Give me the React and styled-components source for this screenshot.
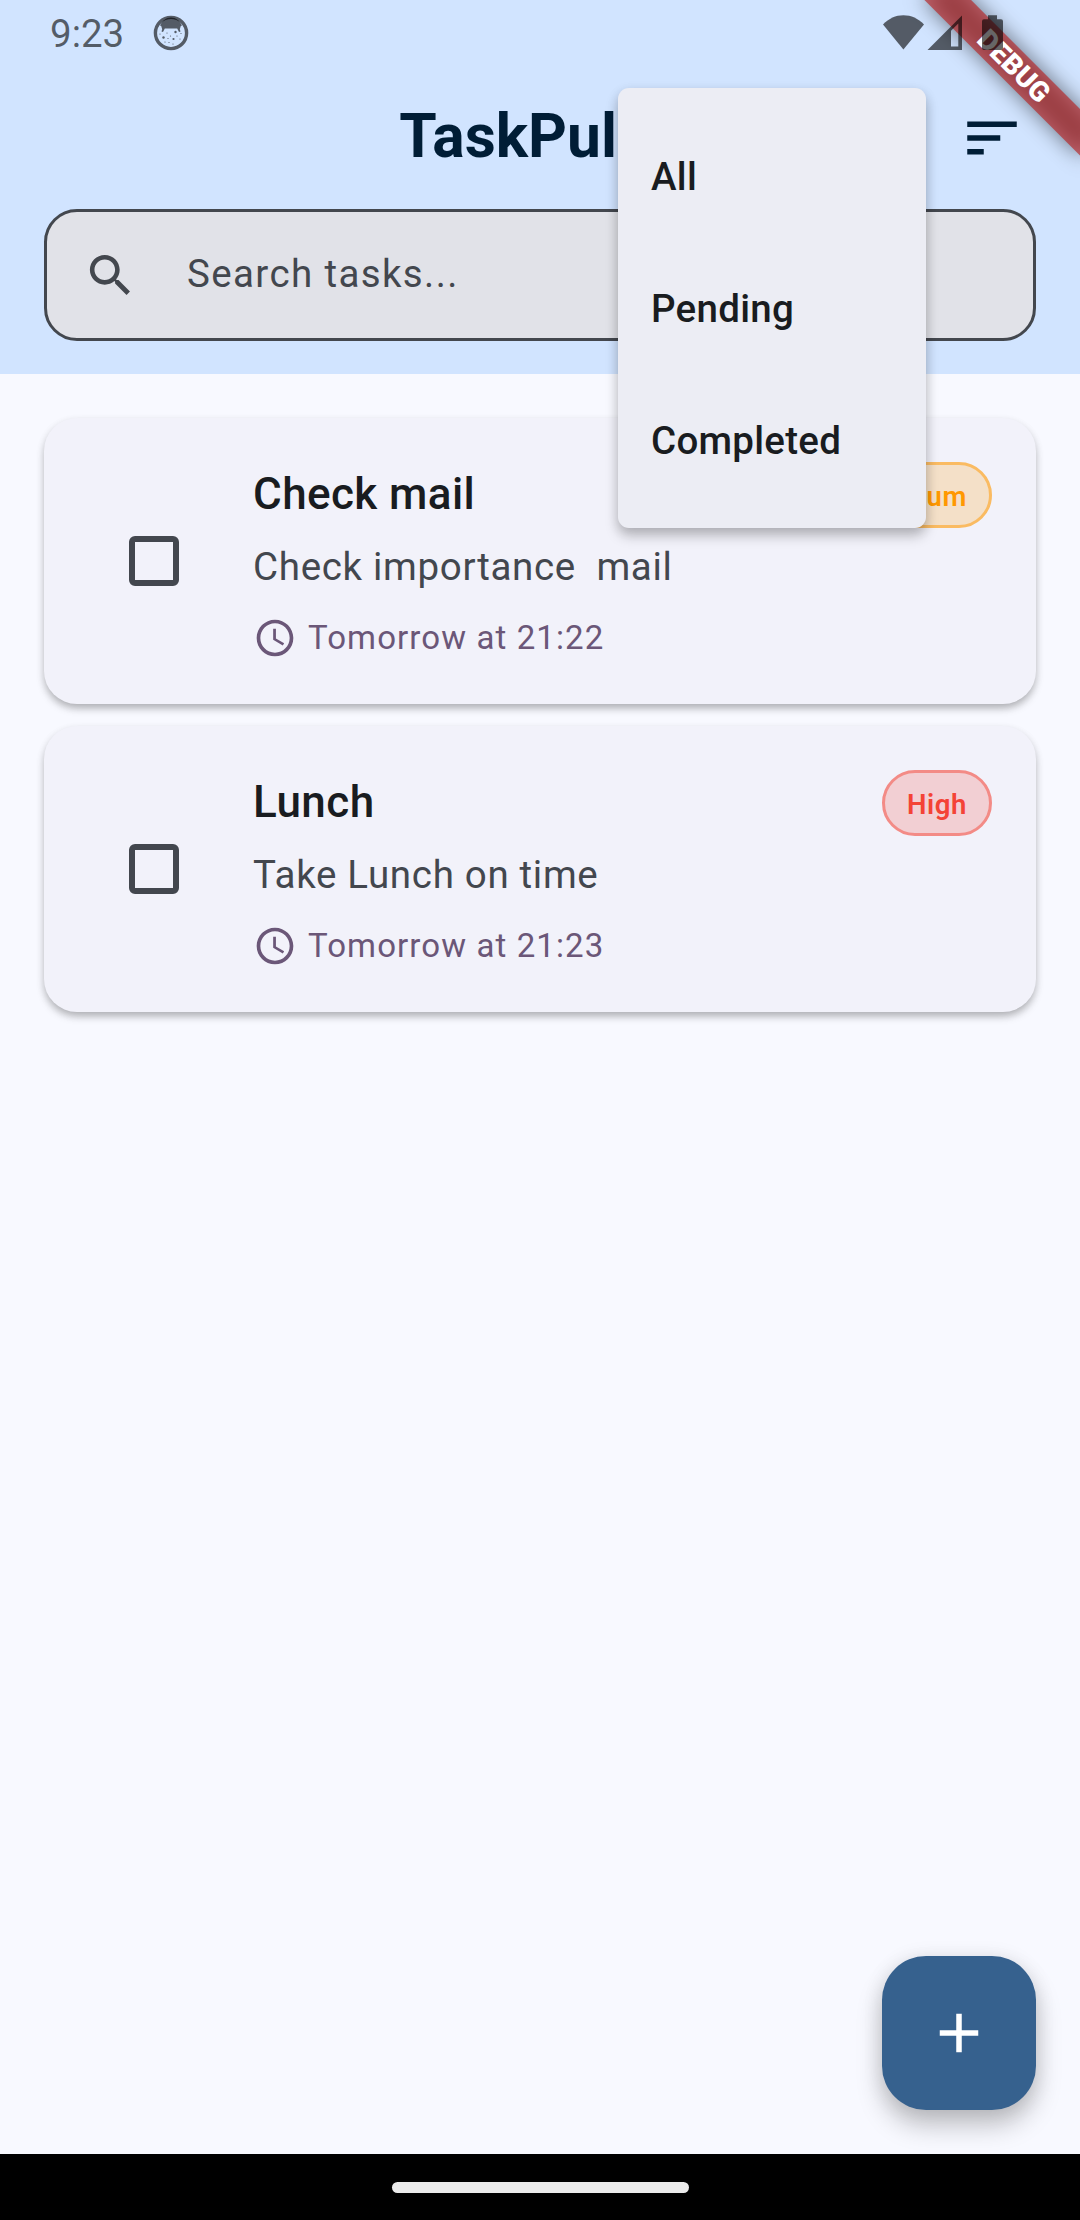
import React from "react";
import styled, { createGlobalStyle } from "styled-components";

const GlobalStyle = createGlobalStyle`
  * { box-sizing: border-box; }
  body { margin: 0; background: #f8f9ff; }
`;

const Screen = styled.div`
  position: relative;
  width: 1080px;
  height: 2220px;
  overflow: hidden;
  display: flex;
  flex-direction: column;
  background: #f8f9ff;
  color: #191c20;
  font-family: Roboto, "Liberation Sans", sans-serif;
`;

const Header = styled.header`
  display: flex;
  flex-direction: column;
  height: 374px;
  background: #d1e4ff;
`;

const StatusBar = styled.div`
  position: relative;
  z-index: 5;
  display: flex;
  align-items: center;
  justify-content: space-between;
  height: 66px;
  padding: 0 77px 0 50px;
  color: rgba(0, 0, 0, 0.6);
`;

const StatusGroup = styled.div`
  display: flex;
  align-items: center;
  gap: ${(p) => p.$gap || 0}px;
`;

const Clock = styled.span`
  font-size: 38.5px;
  line-height: 66px;
  height: 64px;
`;

const Toolbar = styled.div`
  display: flex;
  align-items: center;
  justify-content: flex-end;
  height: 143px;
  padding: 1px 55px 0 121px;
  color: #001d36;
`;

const AppTitle = styled.h1`
  flex: 1;
  margin: 0;
  height: 80px;
  font-size: 60.5px;
  line-height: 77px;
  font-weight: 700;
  text-align: center;
`;

const SearchField = styled.div`
  display: flex;
  align-items: center;
  height: 132px;
  margin: 0 44px;
  border: 3px solid #43474e;
  border-radius: 33px;
  background: #e1e2e8;
  color: #43474e;
`;

const SearchIconSlot = styled.div`
  display: flex;
  justify-content: center;
  width: 126px;
`;

const Placeholder = styled.span`
  padding: 0 0 3px 14px;
  font-size: 38.5px;
  line-height: 55px;
  letter-spacing: 1.375px;
`;

const TaskList = styled.main`
  flex: 1;
  display: flex;
  flex-direction: column;
  gap: 22px;
  padding: 44px;
`;

const TaskCard = styled.article`
  display: flex;
  align-items: flex-start;
  height: 286px;
  padding: 44px;
  border-radius: 33px;
  background: #f2f2fa;
  box-shadow: 0 5px 8px -1px rgba(0, 0, 0, 0.26), 0 3px 8px rgba(0, 0, 0, 0.08);
`;

const CheckSlot = styled.div`
  display: flex;
  align-self: center;
  justify-content: center;
  width: 132px;
  margin-right: 33px;
`;

const CheckBox = styled.div`
  width: 50px;
  height: 50px;
  border: 6px solid #43474e;
  border-radius: 6px;
`;

const TaskBody = styled.div`
  flex: 1;
  display: flex;
  flex-direction: column;
`;

const TaskName = styled.h2`
  margin: 0 0 11px;
  height: 66px;
  font-size: 44px;
  line-height: 64px;
  font-weight: 500;
  letter-spacing: 0.4125px;
`;

const TaskNote = styled.p`
  margin: 0 0 22px;
  font-size: 38.5px;
  line-height: 55px;
  letter-spacing: 0.6875px;
  white-space: pre;
  color: #43474e;
`;

const DueRow = styled.div`
  display: flex;
  align-items: center;
  gap: 11px;
  height: 44px;
  font-size: 33px;
  line-height: 44px;
  letter-spacing: 1.1px;
  color: #6b5778;
`;

const PriorityChip = styled.span`
  height: 66px;
  padding: 2px 22px 0;
  border: 3px solid ${(p) => p.$border};
  border-radius: 33px;
  background: ${(p) => p.$fill};
  color: ${(p) => p.$ink};
  font-size: 27.5px;
  line-height: 60px;
  font-weight: 600;
  letter-spacing: 0.6px;
`;

const AddButton = styled.div`
  position: absolute;
  right: 44px;
  bottom: 110px;
  display: flex;
  align-items: center;
  justify-content: center;
  width: 154px;
  height: 154px;
  border-radius: 44px;
  background: #36618e;
  color: #fff;
  box-shadow: 0 16px 26px rgba(0, 0, 0, 0.22), 0 2px 20px rgba(0, 0, 0, 0.1);
`;

const FilterMenu = styled.div`
  position: absolute;
  z-index: 2;
  top: 88px;
  left: 618px;
  width: 308px;
  padding: 22px 0;
  border-radius: 11px;
  background: #ecedf4;
  box-shadow: 0 8px 13px rgba(0, 0, 0, 0.22), 0 3px 12px rgba(0, 0, 0, 0.1);
`;

const MenuItem = styled.div`
  display: flex;
  align-items: center;
  height: 132px;
  padding: 0 33px;
  font-size: 38.5px;
  font-weight: 500;
  letter-spacing: 0.275px;
`;

const Banner = styled.div`
  position: absolute;
  z-index: 3;
  top: 77px;
  right: -110px;
  width: 220px;
  height: 33px;
  transform-origin: 110px -77px;
  transform: rotate(45deg);
  display: flex;
  align-items: center;
  justify-content: center;
  color: #fff;
  font-size: 28px;
  line-height: 33px;
  font-weight: 900;

  &::before,
  &::after {
    content: "";
    position: absolute;
    inset: 0;
    z-index: -1;
  }

  &::before {
    background: rgba(0, 0, 0, 0.5);
    filter: blur(10.9px);
  }

  &::after {
    background: rgba(183, 28, 28, 0.627);
  }
`;

const NavBar = styled.footer`
  display: flex;
  align-items: center;
  justify-content: center;
  height: 66px;
  background: #000;
`;

const HomePill = styled.div`
  width: 297px;
  height: 11px;
  border-radius: 6px;
  background: #ebebeb;
`;

const Icon = ({ size, d }) => (
  <svg width={size} height={size} viewBox="0 0 24 24" fill="currentColor">
    <path d={d} />
  </svg>
);

const icons = {
  sort: "M3 18h6v-2H3v2zM3 6v2h18V6H3zm0 7h12v-2H3v2z",
  search:
    "M15.5 14h-.79l-.28-.27C15.41 12.59 16 11.11 16 9.5 16 5.91 13.09 3 9.5 3S3 5.91 3 9.5 5.91 16 9.5 16c1.61 0 3.09-.59 4.23-1.57l.27.28v.79l5 4.99L20.49 19l-4.99-5zm-6 0C7.01 14 5 11.99 5 9.5S7.01 5 9.5 5 14 7.01 14 9.5 11.99 14 9.5 14z",
  schedule:
    "M11.99 2C6.47 2 2 6.48 2 12s4.47 10 9.99 10C17.52 22 22 17.52 22 12S17.52 2 11.99 2zM12 20c-4.42 0-8-3.58-8-8s3.58-8 8-8 8 3.58 8 8-3.58 8-8 8zm.5-13H11v6l5.25 3.15.75-1.23-4.5-2.67z",
  add: "M19 13h-6v6h-2v-6H5v-2h6V5h2v6h6v2z",
};

const FaceIcon = () => (
  <svg width="36" height="36" viewBox="0 0 36 36">
    <circle cx="18" cy="18" r="15.6" fill="none" stroke="currentColor" strokeWidth="3.4" />
    <path
      fill="currentColor"
      d="M7 10.500C9.500 5.500 13 2.400 18 2.400S26.500 5.500 29 10.500L27.800 11l-1 3.200.7 2.200-1.500.6-1.800-3.400H11.800L10 17l-1.500-.6.7-2.200-1-3.200z"
    />
    <g fill="currentColor">
      <circle cx="10.500" cy="22.500" r="1.200" />
      <circle cx="22.500" cy="17" r="1.200" />
      <circle cx="20.500" cy="24" r="1.100" />
      <circle cx="14" cy="18" r=".6" />
      <circle cx="17.500" cy="21" r=".6" />
      <circle cx="27" cy="24" r=".6" />
      <circle cx="28" cy="18.500" r=".6" />
      <circle cx="7" cy="19" r=".6" />
      <circle cx="12" cy="27" r=".6" />
      <circle cx="16" cy="27.500" r=".6" />
      <circle cx="20" cy="29" r=".6" />
      <circle cx="24" cy="21" r=".6" />
      <circle cx="15" cy="23.500" r=".6" />
    </g>
  </svg>
);

const SystemIcons = () => (
  <svg width="120" height="36" viewBox="0 0 120 36" fill="currentColor">
    <path d="M0 9.500C6 3.500 12.500.300 20.400.300S35 3.500 41 9.500L20.400 34.500z" />
    <path fillRule="evenodd" d="M44.500 35 79 .500V35zM68 15.800V31.600h7.300V8.600z" />
    <path d="M105 .200h9v4h4a2 2 0 0 1 2 2V33a2 2 0 0 1-2 2h-17a2 2 0 0 1-2-2V6.200a2 2 0 0 1 2-2h4z" />
  </svg>
);

const palette = {
  Medium: { $ink: "#ff9800", $border: "#fabb62", $fill: "#f4e0c8" },
  High: { $ink: "#f44336", $border: "#f38b86", $fill: "#f2cfd3" },
};

const tasks = [
  { name: "Check mail", note: "Check importance  mail", due: "Tomorrow at 21:22", priority: "Medium" },
  { name: "Lunch", note: "Take Lunch on time", due: "Tomorrow at 21:23", priority: "High" },
];

const Task = ({ name, note, due, priority }) => (
  <TaskCard>
    <CheckSlot>
      <CheckBox />
    </CheckSlot>
    <TaskBody>
      <TaskName>{name}</TaskName>
      <TaskNote>{note}</TaskNote>
      <DueRow>
        <Icon size={44} d={icons.schedule} />
        {due}
      </DueRow>
    </TaskBody>
    <PriorityChip {...palette[priority]}>{priority}</PriorityChip>
  </TaskCard>
);

export default function App() {
  return (
    <>
      <GlobalStyle />
      <Screen>
        <Header>
          <StatusBar>
            <StatusGroup $gap={29}>
              <Clock>9:23</Clock>
              <FaceIcon />
            </StatusGroup>
            <SystemIcons />
          </StatusBar>
          <Toolbar>
            <AppTitle>TaskPulse</AppTitle>
            <Icon size={66} d={icons.sort} />
          </Toolbar>
          <SearchField>
            <SearchIconSlot>
              <Icon size={55} d={icons.search} />
            </SearchIconSlot>
            <Placeholder>Search tasks...</Placeholder>
          </SearchField>
        </Header>
        <TaskList>
          {tasks.map((task) => (
            <Task key={task.name} {...task} />
          ))}
        </TaskList>
        <NavBar>
          <HomePill />
        </NavBar>
        <AddButton>
          <Icon size={66} d={icons.add} />
        </AddButton>
        <FilterMenu>
          <MenuItem>All</MenuItem>
          <MenuItem>Pending</MenuItem>
          <MenuItem>Completed</MenuItem>
        </FilterMenu>
        <Banner>DEBUG</Banner>
      </Screen>
    </>
  );
}
